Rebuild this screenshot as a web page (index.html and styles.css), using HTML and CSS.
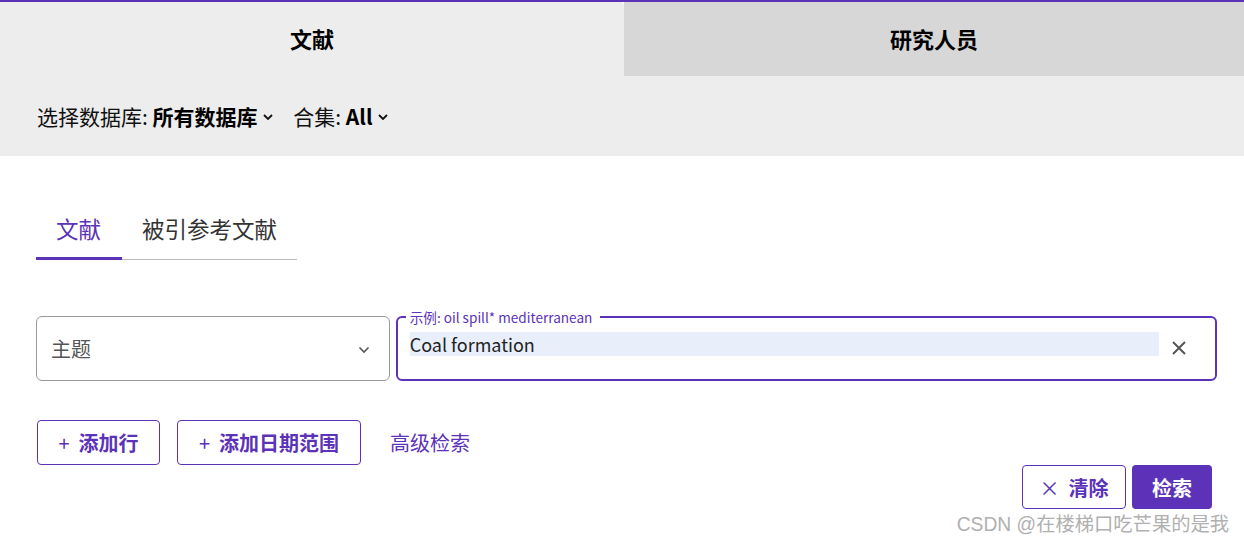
FILE: index.html
```html
<!DOCTYPE html>
<html lang="zh">

<head>
  <meta charset="UTF-8">
  <title>检索</title>
  <link rel="stylesheet" href="styles.css">
</head>

<body>
  <div class="top-tabs">
    <div class="top-tab active">文献</div>
    <div class="top-tab">研究人员</div>
  </div>
  <div class="db-bar">
    <span class="db-item">选择数据库: <b>所有数据库</b>
      <svg class="chev" viewBox="0 0 10 6"><path d="M1 1l4 4 4-4" /></svg>
    </span>
    <span class="db-item">合集: <b>All</b>
      <svg class="chev" viewBox="0 0 10 6"><path d="M1 1l4 4 4-4" /></svg>
    </span>
  </div>

  <div class="main">
    <div class="sub-tabs">
      <div class="sub-tab active">文献</div>
      <div class="sub-tab">被引参考文献</div>
    </div>

    <div class="search-row">
      <div class="field-select">
        <span>主题</span>
        <svg class="select-chev" viewBox="0 0 12 8"><path d="M1.5 1.5l4.5 4.5 4.5-4.5" /></svg>
      </div>
      <div class="field-input">
        <span class="legend">示例: oil spill* mediterranean</span>
        <div class="value">Coal formation</div>
        <svg class="clear" viewBox="0 0 16 16"><path d="M2 2l12 12M14 2L2 14" /></svg>
      </div>
    </div>

    <div class="action-row">
      <button class="btn-outline btn-row"><span class="plus">+</span>添加行</button>
      <button class="btn-outline btn-date"><span class="plus">+</span>添加日期范围</button>
      <a class="adv-link" href="javascript:void(0);">高级检索</a>
    </div>

    <div class="submit-row">
      <button class="btn-outline btn-small"><span class="plus">×</span>清除</button>
      <button class="btn-fill">检索</button>
    </div>
  </div>

  <div class="watermark">CSDN @在楼梯口吃芒果的是我</div>
</body>

</html>
```

FILE: styles.css
```css
* {
  margin: 0;
  padding: 0;
  box-sizing: border-box;
}

body {
  width: 1244px;
  height: 545px;
  overflow: hidden;
  background: #fff;
  font-family: "Noto Sans CJK SC", "Noto Sans", sans-serif;
  color: #222;
  position: relative;
}

/* 顶部大标签 */
.top-tabs {
  display: flex;
  height: 76px;
  border-top: 2px solid #5b32b8;
}

.top-tab {
  flex: 1;
  display: flex;
  align-items: center;
  justify-content: center;
  font-size: 22px;
  font-weight: bold;
  color: #000;
  background: #d7d7d7;
  padding-bottom: 2px;
}

.top-tab.active {
  flex: none;
  width: 624px;
  background: #ededed;
  border-top-right-radius: 4px;
}

.db-bar {
  height: 80px;
  background: #ededed;
  display: flex;
  align-items: center;
  gap: 20px;
  padding: 0 37px 0 37px;
  font-size: 21px;
  color: #111;
}

.db-item b {
  color: #000;
}

.chev {
  width: 10px;
  height: 6px;
  fill: none;
  stroke: #111;
  stroke-width: 1.8;
  vertical-align: middle;
  margin-left: 1px;
  position: relative;
  top: -2px;
}

.main {
  padding: 0 27px 0 36px;
}

/* 下方小标签 */
.sub-tabs {
  display: flex;
  margin-top: 56px;
  width: 261px;
  border-bottom: 1px solid #bbb;
}

.sub-tab {
  flex: none;
  white-space: nowrap;
  font-size: 22.5px;
  color: #333;
  padding: 0 20px 14px 20px;
}

.sub-tab.active {
  width: 86px;
  color: #5b32b8;
  border-bottom: 3px solid #5b32b8;
  margin-bottom: -1px;
  padding-bottom: 13px;
}

.search-row {
  display: flex;
  gap: 6px;
  margin-top: 56px;
}

.field-select {
  width: 354px;
  height: 65px;
  border: 1px solid #999;
  border-radius: 6px;
  display: flex;
  align-items: center;
  justify-content: space-between;
  padding: 0 19px 0 14px;
  font-size: 20px;
  color: #555;
}

.select-chev {
  width: 12px;
  height: 8px;
  fill: none;
  stroke: #555;
  stroke-width: 1.6;
  margin-top: 2px;
}

.field-input {
  width: 822px;
  height: 65px;
  border: 2px solid #5b32b8;
  border-radius: 6px;
  position: relative;
  display: flex;
  align-items: center;
  padding: 0 28px 0 12px;
}

.field-input .legend {
  position: absolute;
  top: -9px;
  left: 8px;
  background: #fff;
  padding: 0 8px 0 4px;
  font-size: 13.6px;
  color: #5b32b8;
  line-height: 16px;
}

.field-input .value {
  flex: 1;
  background: #e8effb;
  font-size: 18px;
  color: #222;
  line-height: 24px;
  margin-top: -9px;
  margin-right: 12px;
}

.clear {
  width: 16px;
  height: 16px;
  fill: none;
  stroke: #555;
  stroke-width: 2;
  margin-top: -2px;
}

.action-row {
  display: flex;
  align-items: center;
  gap: 17px;
  margin-top: 39px;
  padding-left: 1px;
}

.btn-outline {
  height: 45px;
  padding: 0;
  border: 1px solid #5b32b8;
  border-radius: 4px;
  background: #fff;
  color: #5b32b8;
  font-family: inherit;
  font-size: 20px;
  font-weight: bold;
}

.btn-outline .plus {
  font-weight: normal;
  margin-right: 9px;
}

.btn-row {
  width: 123px;
}

.btn-date {
  width: 184px;
}

.adv-link {
  margin-left: 12px;
  font-size: 20px;
  color: #5b32b8;
  text-decoration: none;
}

.submit-row {
  display: flex;
  justify-content: flex-end;
  gap: 6px;
  margin-top: 0;
  padding-right: 5px;
}

.btn-small {
  width: 104px;
  height: 44px;
}

.btn-fill {
  width: 80px;
  height: 44px;
  border: none;
  border-radius: 4px;
  background: #5b32b8;
  color: #fff;
  font-family: inherit;
  font-size: 20px;
  font-weight: bold;
}

.watermark {
  position: absolute;
  right: 15px;
  bottom: 8px;
  font-family: "Liberation Sans", "Noto Sans CJK SC", sans-serif;
  font-size: 19.3px;
  color: #b0b0b0;
}
```
